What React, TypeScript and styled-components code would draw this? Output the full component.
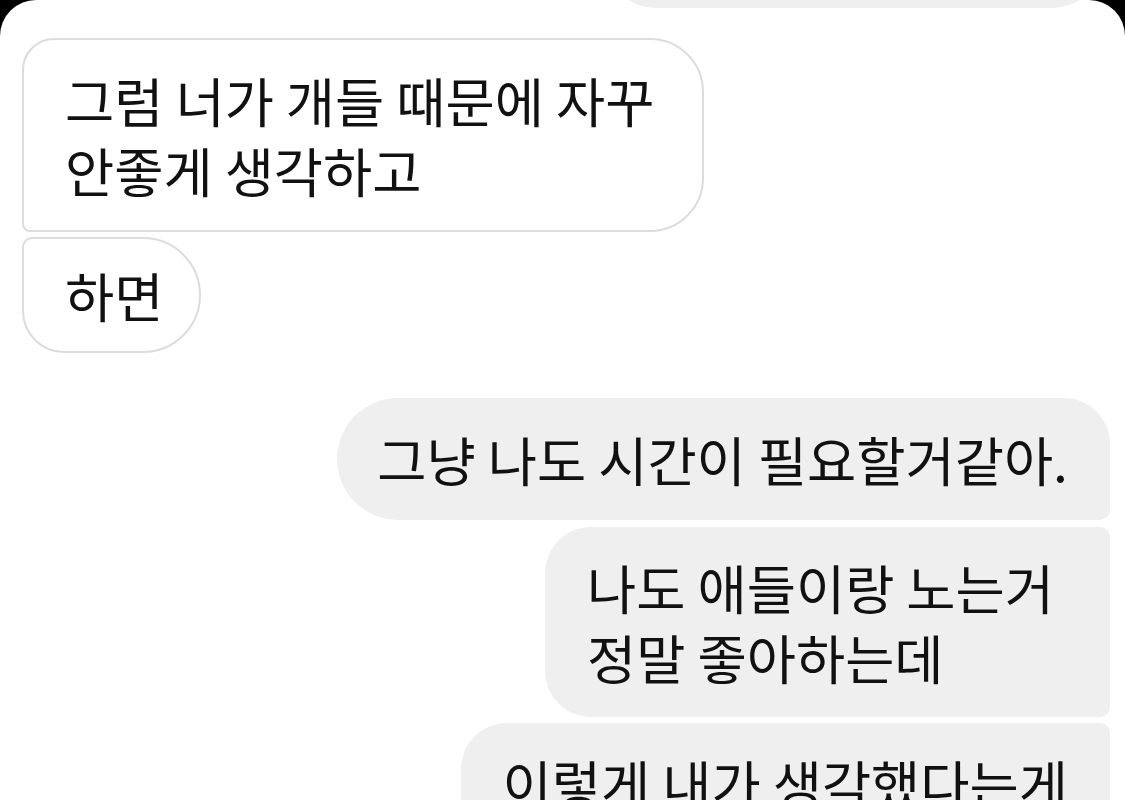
import styled, {createGlobalStyle} from "styled-components";

type Side = "in" | "out";

interface Message {
    id: number;
    side: Side;
    text: string;
    radius: string;
    gap: number;
    pad: string;
}

// scrolled conversation, newest group at the bottom
const messages: Message[] = [
    {id: 1, side: "out", text: "오늘은 좀 쉬고 싶어", radius: "60px 48px 60px 60px", gap: 0, pad: "26px 42px 26px 40px"},
    {id: 2, side: "in", text: "그럼 너가 개들 때문에 자꾸\n안좋게 생각하고", radius: "32px 54px 54px 8px", gap: 30, pad: "25px 48px 25px 41px"},
    {id: 3, side: "in", text: "하면", radius: "10px 58px 58px 42px", gap: 5, pad: "21px 36px 21px 41px"},
    {id: 4, side: "out", text: "그냥 나도 시간이 필요할거같아.", radius: "61px 46px 10px 61px", gap: 45, pad: "26px 42px 26px 40px"},
    {id: 5, side: "out", text: "나도 애들이랑 노는거\n정말 좋아하는데", radius: "46px 10px 10px 46px", gap: 7, pad: "25px 56px 25px 42px"},
    {id: 6, side: "out", text: "이렇게 내가 생각했다는게\n미안하기도 하고", radius: "46px 10px 46px 46px", gap: 6, pad: "25px 42px 25px 42px"},
];

export default function App() {
    return (
        <>
            <GlobalStyle />
            <Screen>
                <Thread>
                    {messages.map((message) => (
                        <Row key={message.id} $side={message.side} $gap={message.gap}>
                            <Bubble $side={message.side} $radius={message.radius} $pad={message.pad}>
                                {message.text}
                            </Bubble>
                        </Row>
                    ))}
                </Thread>
            </Screen>
        </>
    );
}

const GlobalStyle = createGlobalStyle`
  html, body {
    margin: 0;
    padding: 0;
    background: #000;
  }
  body {
    font-family: "Noto Sans CJK KR", "Noto Sans", sans-serif;
  }
`;

const Screen = styled.div`
  width: 1125px;
  height: 800px;
  background: #fff;
  border-radius: 36px 36px 0 0;
  overflow: hidden;
`;

const Thread = styled.div`
  display: flex;
  flex-direction: column;
  margin-top: -114px;
`;

const Row = styled.div<{ $side: Side; $gap: number }>`
  display: flex;
  justify-content: ${(p) => (p.$side === "out" ? "flex-end" : "flex-start")};
  padding: 0 15px 0 22px;
  margin-top: ${(p) => p.$gap}px;
`;

const Bubble = styled.div<{ $side: Side; $radius: string; $pad: string }>`
  white-space: pre-line;
  font-size: 53.5px;
  line-height: 70px;
  color: #111;
  border-radius: ${(p) => p.$radius};
  background: ${(p) => (p.$side === "out" ? "#efefef" : "#fff")};
  border: ${(p) => (p.$side === "out" ? "none" : "2px solid #dcdcdc")};
  padding: ${(p) => p.$pad};
`;
